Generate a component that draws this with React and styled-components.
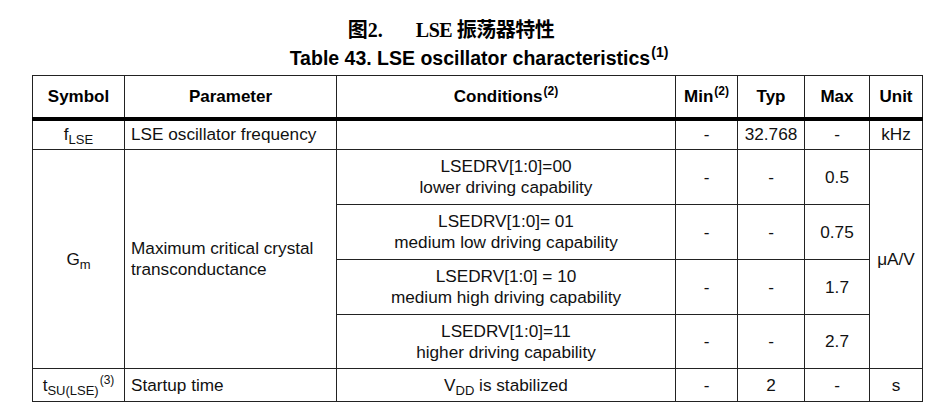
import React from 'react';
import styled, { createGlobalStyle } from 'styled-components';

const GlobalStyle = createGlobalStyle`
  html, body {
    margin: 0;
    padding: 0;
    background: #fff;
  }
  body {
    font-family: "Liberation Sans", Arial, sans-serif;
    color: #111;
  }
`;

const drives = [
  { code: 'LSEDRV[1:0]=00', label: 'lower driving capability', max: '0.5', height: 55 },
  { code: 'LSEDRV[1:0]= 01', label: 'medium low driving capability', max: '0.75', height: 55 },
  { code: 'LSEDRV[1:0] = 10', label: 'medium high driving capability', max: '1.7', height: 55 },
  { code: 'LSEDRV[1:0]=11', label: 'higher driving capability', max: '2.7', height: 54 },
];

function App() {
  return (
    <>
      <GlobalStyle />
      <Page>
        <FigureTitle>
          <span>图2.</span>
          <Latin>LSE 振荡器特性</Latin>
        </FigureTitle>
        <TableTitle>
          Table 43. LSE oscillator characteristics<Sup $title>(1)</Sup>
        </TableTitle>
        <Grid>
          <colgroup>
            <col style={{ width: 92 }} />
            <col style={{ width: 212 }} />
            <col style={{ width: 339 }} />
            <col style={{ width: 62 }} />
            <col style={{ width: 67 }} />
            <col style={{ width: 65 }} />
            <col style={{ width: 53 }} />
          </colgroup>
          <thead>
            <Row $h={43}>
              <HeadCell>Symbol</HeadCell>
              <HeadCell>Parameter</HeadCell>
              <HeadCell>Conditions<Sup>(2)</Sup></HeadCell>
              <HeadCell>Min<Sup>(2)</Sup></HeadCell>
              <HeadCell>Typ</HeadCell>
              <HeadCell>Max</HeadCell>
              <HeadCell>Unit</HeadCell>
            </Row>
          </thead>
          <tbody>
            <Row $h={31}>
              <Cell>f<Sub>LSE</Sub></Cell>
              <Cell $left>LSE oscillator frequency</Cell>
              <Cell />
              <Cell>-</Cell>
              <Cell>32.768</Cell>
              <Cell>-</Cell>
              <Cell>kHz</Cell>
            </Row>
            {drives.map((d, i) => (
              <Row key={d.code} $h={d.height}>
                {i === 0 && (
                  <>
                    <Cell rowSpan={4}>G<Sub>m</Sub></Cell>
                    <Cell rowSpan={4} $left>
                      Maximum critical crystal
                      <br />
                      transconductance
                    </Cell>
                  </>
                )}
                <Cell>
                  {d.code}
                  <br />
                  {d.label}
                </Cell>
                <Cell>-</Cell>
                <Cell>-</Cell>
                <Cell>{d.max}</Cell>
                {i === 0 && <Cell rowSpan={4}>μA/V</Cell>}
              </Row>
            ))}
            <Row $h={33}>
              <Cell>t<Sub>SU(LSE)</Sub><Sup>(3)</Sup></Cell>
              <Cell $left>Startup time</Cell>
              <Cell>V<Sub>DD</Sub> is stabilized</Cell>
              <Cell>-</Cell>
              <Cell>2</Cell>
              <Cell>-</Cell>
              <Cell>s</Cell>
            </Row>
          </tbody>
        </Grid>
      </Page>
    </>
  );
}

const Page = styled.div`
  width: 946px;
  height: 415px;
  overflow: hidden;
  padding-top: 16px;
  box-sizing: border-box;
`;

const FigureTitle = styled.div`
  display: flex;
  justify-content: center;
  gap: 33px;
  padding-right: 44px;
  font-family: "Liberation Serif", "Noto Sans CJK SC", serif;
  font-weight: bold;
  font-size: 20px;
  line-height: 28px;
  color: #000;
`;

const Latin = styled.span`
  letter-spacing: -0.5px;
`;

const TableTitle = styled.div`
  margin-top: 2px;
  padding-left: 12px;
  text-align: center;
  font-weight: bold;
  font-size: 19.5px;
  line-height: 24px;
  color: #000;
`;

const Grid = styled.table`
  margin: 5px 0 0 32px;
  border-collapse: collapse;
  table-layout: fixed;
  width: 890px;
  font-size: 17.2px;
`;

const Row = styled.tr`
  height: ${(p) => p.$h}px;
`;

const HeadCell = styled.th`
  border: 1px solid #222;
  border-bottom: 4px solid #000;
  padding: 0 2px;
  font-size: 17px;
  font-weight: bold;
  text-align: center;
  vertical-align: middle;
  line-height: 21px;
  color: #000;
`;

const Cell = styled.td`
  border: 1px solid #222;
  padding: 0 ${(p) => (p.$left ? '6px' : '2px')};
  text-align: ${(p) => (p.$left ? 'left' : 'center')};
  vertical-align: middle;
  line-height: 21px;
`;

const Sub = styled.sub`
  font-size: 13px;
  line-height: 0;
  vertical-align: -4px;
`;

const Sup = styled.sup`
  font-size: ${(p) => (p.$title ? '14px' : '12px')};
  line-height: 0;
  vertical-align: ${(p) => (p.$title ? '8px' : '7px')};
  margin-left: 1px;
`;

export default App;
